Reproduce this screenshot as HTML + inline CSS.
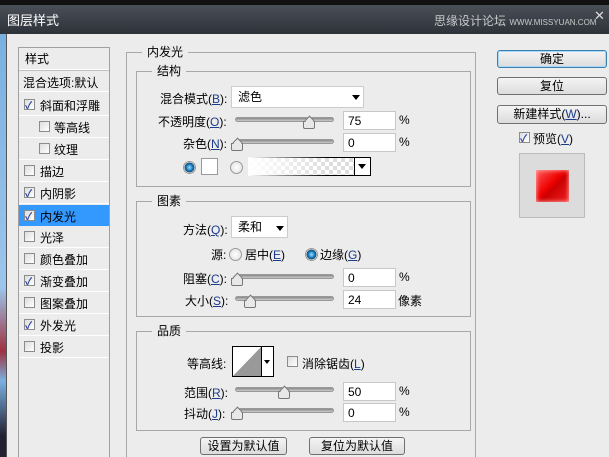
<!DOCTYPE html>
<html style="width:609px;height:457px;overflow:hidden"><head><meta charset="utf-8"><style>
*{box-sizing:border-box;margin:0;padding:0}
body{width:609px;height:457px;overflow:hidden;position:relative;background:#ececec;font-family:"Liberation Sans","Noto Sans CJK SC",sans-serif;font-size:12px;color:#000}
.a{position:absolute;white-space:nowrap}
.u{text-decoration:underline;color:#1a3a8a}
.box{position:absolute;border:1px solid #a8a8a8}
.lg{position:absolute;background:#ececec;padding:0 5px;line-height:14px}
.cb{position:absolute;width:11px;height:11px;border:1px solid #8c8c8c;background:linear-gradient(135deg,#ddd,#fff)}
.ck::after{content:"✓";position:absolute;left:0;top:-3px;font-size:10px;color:#2a3fa0;font-weight:bold}
.row{position:absolute;left:19px;width:90px;height:22px;border-bottom:1px solid #fff}
.trk{position:absolute;height:5px;border-radius:3px;background:linear-gradient(#888,#ccc);border:1px solid #999}
.th{position:absolute;width:12px;height:8px;background:#e8e8e8;border:1px solid #777;border-radius:0 0 2px 2px}
.th::before{content:"";position:absolute;left:2px;top:-5px;width:6px;height:6px;background:#e8e8e8;border-left:1px solid #777;border-top:1px solid #777;transform:rotate(45deg)}
.in{position:absolute;background:#fff;border:1px solid #c8c8c8;padding-left:4px;line-height:18px;height:19px}
.btn{position:absolute;border:1px solid #707070;border-radius:3px;background:linear-gradient(#f4f4f4,#dcdcdc);text-align:center;line-height:16px}
.rd{position:absolute;width:13px;height:13px;border-radius:50%;border:1px solid #999;background:radial-gradient(#fff,#ddd)}
.rdon{background:radial-gradient(circle,#9ee0ff 0,#1a7fc4 40%,#11466e 60%,#ddd 65%)}
.dd{position:absolute;background:#fff;border:1px solid #ccc;padding-left:6px;line-height:20px}
.tri{position:absolute;width:0;height:0;border-left:4px solid transparent;border-right:4px solid transparent;border-top:5px solid #000}
</style></head><body>
<div class="a" style="left:0;top:0;width:609px;height:6px;background:#111"></div>
<div class="a" style="left:0;top:5px;width:609px;height:29px;background:linear-gradient(#4a5058,#2e333a)"></div>
<div class="a" style="left:7px;top:10px;color:#fff;font-size:13px">图层样式</div>
<div class="a" style="left:434px;top:12px;color:#c8c8c8;font-size:12px">思缘设计论坛 <span style="font-size:8px">WWW.MISSYUAN.COM</span></div>
<div class="a" style="left:594px;top:8px;color:#ddd;font-size:13px">✕</div>
<div class="a" style="left:0;top:34px;width:6px;height:423px;background:linear-gradient(#7ab0e0 0,#9cc6ec 60%,#a03040 75%,#7ab0e0 82%,#223 95%)"></div>
<div class="a" style="left:6px;top:34px;width:603px;height:423px;background:#ececec;border-left:1px solid #555"></div>

<div class="a" style="left:18px;top:47px;width:92px;height:410px;border:1px solid #a0a0a0;border-bottom:none"></div>
<div class="row" style="top:47px;height:23px"><span class="a" style="left:6px;top:3px">样式</span></div>
<div class="row" style="top:70px;height:22px;border-top:1px solid #c0c0c0"><span class="a" style="left:4px;top:3px">混合选项:默认</span></div>
<div class="row" style="top:94px"><div class="cb ck" style="left:5px;top:5px"></div><span class="a" style="left:21px;top:3px">斜面和浮雕</span></div>
<div class="row" style="top:116px"><div class="cb" style="left:20px;top:5px"></div><span class="a" style="left:35px;top:3px">等高线</span></div>
<div class="row" style="top:138px"><div class="cb" style="left:20px;top:5px"></div><span class="a" style="left:35px;top:3px">纹理</span></div>
<div class="row" style="top:160px"><div class="cb" style="left:5px;top:5px"></div><span class="a" style="left:21px;top:3px">描边</span></div>
<div class="row" style="top:182px"><div class="cb ck" style="left:5px;top:5px"></div><span class="a" style="left:21px;top:3px">内阴影</span></div>
<div class="row" style="top:205px;height:21px;background:#3399ff;border:none"><div class="cb ck" style="left:5px;top:5px"></div><span class="a" style="left:21px;top:3px">内发光</span></div>
<div class="row" style="top:226px"><div class="cb" style="left:5px;top:5px"></div><span class="a" style="left:21px;top:3px">光泽</span></div>
<div class="row" style="top:248px"><div class="cb" style="left:5px;top:5px"></div><span class="a" style="left:21px;top:3px">颜色叠加</span></div>
<div class="row" style="top:270px"><div class="cb ck" style="left:5px;top:5px"></div><span class="a" style="left:21px;top:3px">渐变叠加</span></div>
<div class="row" style="top:292px"><div class="cb" style="left:5px;top:5px"></div><span class="a" style="left:21px;top:3px">图案叠加</span></div>
<div class="row" style="top:314px"><div class="cb ck" style="left:5px;top:5px"></div><span class="a" style="left:21px;top:3px">外发光</span></div>
<div class="row" style="top:336px"><div class="cb" style="left:5px;top:5px"></div><span class="a" style="left:21px;top:3px">投影</span></div>

<div class="box" style="left:126px;top:52px;width:350px;height:405px;border-bottom:none"></div>
<div class="lg" style="left:142px;top:45px">内发光</div>

<div class="box" style="left:136px;top:71px;width:335px;height:116px"></div>
<div class="lg" style="left:152px;top:64px">结构</div>
<div class="a" style="left:160px;top:90px">混合模式(<span class="u">B</span>):</div>
<div class="dd" style="left:231px;top:86px;width:133px;height:22px">滤色</div><div class="tri" style="left:352px;top:95px"></div>
<div class="a" style="left:158px;top:113px">不透明度(<span class="u">O</span>):</div>
<div class="trk" style="left:235px;top:117px;width:99px"></div><div class="th" style="left:303px;top:121px"></div>
<div class="in" style="left:343px;top:111px;width:53px">75</div><div class="a" style="left:399px;top:113px">%</div>
<div class="a" style="left:183px;top:135px">杂色(<span class="u">N</span>):</div>
<div class="trk" style="left:235px;top:139px;width:99px"></div><div class="th" style="left:231px;top:143px"></div>
<div class="in" style="left:343px;top:133px;width:53px">0</div><div class="a" style="left:399px;top:135px">%</div>
<div class="rd rdon" style="left:183px;top:161px"></div>
<div class="a" style="left:201px;top:158px;width:17px;height:17px;background:#fff;border:1px solid #999"></div>
<div class="rd" style="left:230px;top:161px"></div>
<div class="a" style="left:248px;top:157px;width:123px;height:19px;border:1px solid #000;background:repeating-conic-gradient(#ddd 0 25%,#fff 0 50%) 0 0/8px 8px"></div>
<div class="a" style="left:248px;top:157px;width:80px;height:19px;background:linear-gradient(90deg,#fff,rgba(255,255,255,0))"></div>
<div class="a" style="left:354px;top:157px;width:17px;height:19px;background:#fff;border:1px solid #000"></div><div class="tri" style="left:358px;top:164px"></div>

<div class="box" style="left:136px;top:201px;width:335px;height:116px"></div>
<div class="lg" style="left:152px;top:194px">图素</div>
<div class="a" style="left:183px;top:221px">方法(<span class="u">Q</span>):</div>
<div class="dd" style="left:231px;top:216px;width:57px;height:22px">柔和</div><div class="tri" style="left:276px;top:226px"></div>
<div class="a" style="left:211px;top:246px">源:</div>
<div class="rd" style="left:229px;top:248px"></div><div class="a" style="left:245px;top:246px">居中(<span class="u">E</span>)</div>
<div class="rd rdon" style="left:305px;top:248px"></div><div class="a" style="left:320px;top:246px">边缘(<span class="u">G</span>)</div>
<div class="a" style="left:183px;top:270px">阻塞(<span class="u">C</span>):</div>
<div class="trk" style="left:235px;top:274px;width:99px"></div><div class="th" style="left:231px;top:278px"></div>
<div class="in" style="left:343px;top:268px;width:53px">0</div><div class="a" style="left:399px;top:270px">%</div>
<div class="a" style="left:185px;top:292px">大小(<span class="u">S</span>):</div>
<div class="trk" style="left:235px;top:296px;width:99px"></div><div class="th" style="left:244px;top:300px"></div>
<div class="in" style="left:343px;top:290px;width:53px">24</div><div class="a" style="left:398px;top:292px">像素</div>

<div class="box" style="left:136px;top:331px;width:335px;height:100px"></div>
<div class="lg" style="left:152px;top:324px">品质</div>
<div class="a" style="left:187px;top:355px">等高线:</div>
<div class="a" style="left:232px;top:346px;width:42px;height:31px;border:1px solid #000;background:#fff"></div>
<svg class="a" style="left:233px;top:347px" width="28" height="29"><polygon points="0,29 28,0 28,29" fill="#999"/></svg>
<div class="a" style="left:261px;top:347px;width:1px;height:29px;background:#000"></div>
<div class="tri" style="left:264px;top:360px;border-left-width:3px;border-right-width:3px;border-top-width:4px"></div>
<div class="cb" style="left:287px;top:356px"></div>
<div class="a" style="left:302px;top:355px">消除锯齿(<span class="u">L</span>)</div>
<div class="a" style="left:184px;top:384px">范围(<span class="u">R</span>):</div>
<div class="trk" style="left:235px;top:387px;width:99px"></div><div class="th" style="left:278px;top:391px"></div>
<div class="in" style="left:343px;top:382px;width:53px">50</div><div class="a" style="left:399px;top:384px">%</div>
<div class="a" style="left:184px;top:405px">抖动(<span class="u">J</span>):</div>
<div class="trk" style="left:235px;top:408px;width:99px"></div><div class="th" style="left:231px;top:412px"></div>
<div class="in" style="left:343px;top:403px;width:53px">0</div><div class="a" style="left:399px;top:405px">%</div>

<div class="btn" style="left:200px;top:437px;width:87px;height:18px">设置为默认值</div>
<div class="btn" style="left:309px;top:437px;width:96px;height:18px">复位为默认值</div>

<div class="btn" style="left:497px;top:50px;width:110px;height:18px;border-color:#3c7fb1;box-shadow:inset 0 0 0 1px #a8d8f8">确定</div>
<div class="btn" style="left:497px;top:77px;width:110px;height:18px">复位</div>
<div class="btn" style="left:497px;top:105px;width:110px;height:19px">新建样式(<span class="u">W</span>)...</div>
<div class="cb ck" style="left:519px;top:132px"></div>
<div class="a" style="left:533px;top:130px">预览(<span class="u">V</span>)</div>
<div class="a" style="left:519px;top:153px;width:66px;height:65px;background:#dcdcdc;border:1px solid #bbb"></div>
<div class="a" style="left:536px;top:170px;width:33px;height:32px;background:linear-gradient(135deg,#ff5a5a 0,#e00 45%,#c00 55%,#e22 100%);box-shadow:inset 0 0 5px #fbb"></div>
</body></html>
